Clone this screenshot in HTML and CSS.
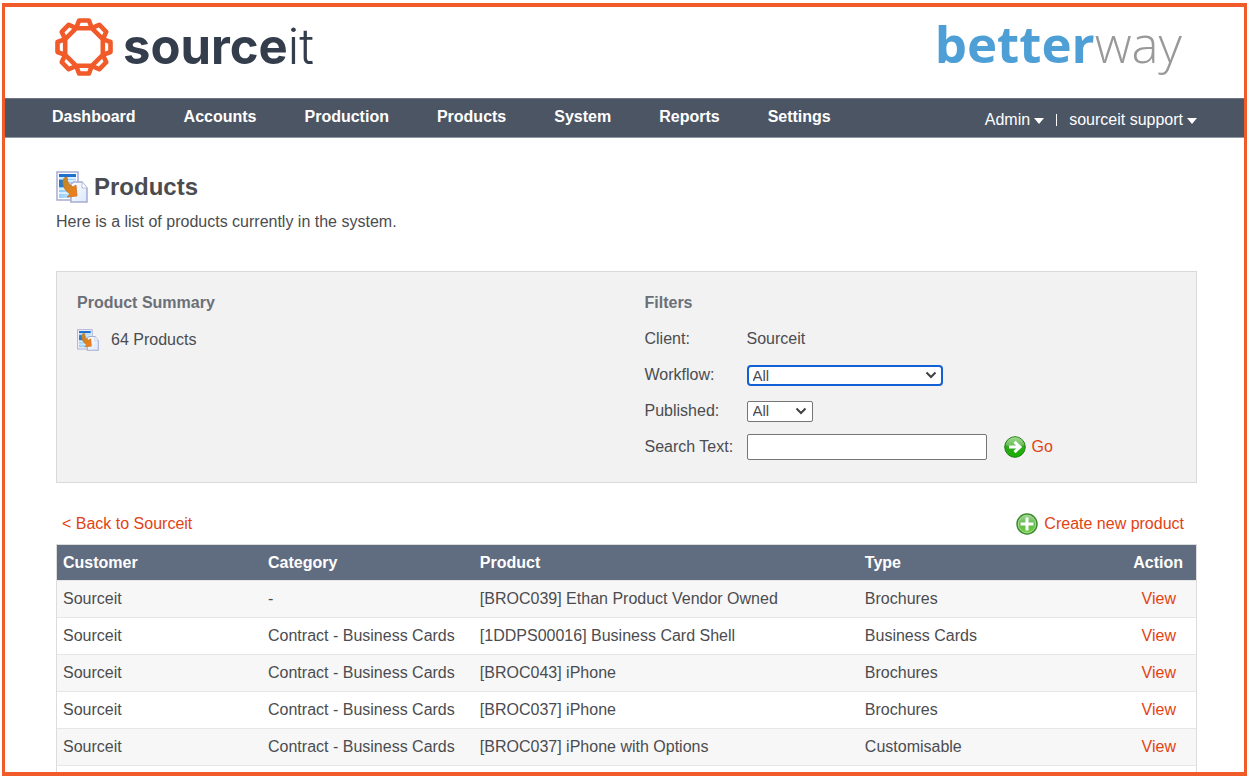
FILE: index.html
```html
<!DOCTYPE html>
<html lang="en">
<head>
<meta charset="utf-8">
<title>Products - sourceit</title>
<link rel="stylesheet" href="styles.css">
</head>
<body>
<svg class="defs" aria-hidden="true">
  <defs>
    <linearGradient id="page-blue" x1="0" y1="0" x2="1" y2="1"><stop offset="0" stop-color="#6fbdf5"/><stop offset="1" stop-color="#c9e8ff"/></linearGradient>
    <linearGradient id="page-white" x1="0" y1="0" x2="1" y2="1"><stop offset="0" stop-color="#fff"/><stop offset="1" stop-color="#d9e8fb"/></linearGradient>
    <linearGradient id="arrow-orange" x1="0" y1="0" x2="1" y2="1"><stop offset="0" stop-color="#b5882c"/><stop offset="1" stop-color="#fb7d15"/></linearGradient>
    <linearGradient id="ball-green" x1="0" y1="0" x2="0" y2="1"><stop offset="0" stop-color="#8ad070"/><stop offset=".5" stop-color="#2fa81c"/><stop offset="1" stop-color="#17b000"/></linearGradient>
    <linearGradient id="ball-soft" x1="0" y1="0" x2="0" y2="1"><stop offset="0" stop-color="#a5d89b"/><stop offset=".5" stop-color="#62b94c"/><stop offset="1" stop-color="#6fd03a"/></linearGradient>
    <symbol id="icon-product" viewBox="0 0 32 32">
      <path d="M1 1h21v28H1z" fill="#fff" stroke="#a6acd2" stroke-width="1.5"/>
      <path d="M3 3h17v24H3z" fill="url(#page-blue)"/>
      <path d="M3 3h17v3H3z" fill="#1d6fd2"/>
      <path d="M3 7h17M12 10h8M12 13h8M3 18h9M3 22h12" stroke="#eef8ff" stroke-width="1.3"/>
      <path d="M3 9h7v7H3z" fill="#237bcf"/>
      <path d="M15 31V13l3-2h8l5 6v14z" fill="url(#page-white)" stroke="#a6acd2" stroke-width="1.5"/>
      <path d="M26 11v6h5" fill="#fff" stroke="#b7bddc"/>
      <path d="M7 9q1-3 4-3 0 7 6 10l3-2 1 11-10 1 3-3Q6 18 7 9z" fill="url(#arrow-orange)" stroke="#c9722a" stroke-width=".8"/>
    </symbol>
  </defs>
</svg>
<div class="frame">
  <header class="brand-bar">
    <a class="brand" href="#">
      <svg class="brand-mark" viewBox="-30 -30 60 60" aria-hidden="true">
        <g fill="none" stroke="#f15a29" stroke-width="4.6" stroke-linejoin="round">
          <path d="M-7.800-18.800H7.800L18.800-7.800V7.800L7.800 18.800H-7.800L-18.800 7.800V-7.800z"/>
          <path id="tooth" d="M-7.800-18.800L-5-26.500H5L7.800-18.800"/>
          <use href="#tooth" transform="rotate(45)"/>
          <use href="#tooth" transform="rotate(90)"/>
          <use href="#tooth" transform="rotate(135)"/>
          <use href="#tooth" transform="rotate(180)"/>
          <use href="#tooth" transform="rotate(225)"/>
          <use href="#tooth" transform="rotate(270)"/>
          <use href="#tooth" transform="rotate(315)"/>
        </g>
      </svg>
      <span class="brand-name"><b>source</b>it</span>
    </a>
    <div class="client-name"><b>better</b>way</div>
  </header>
  <nav class="nav">
    <div class="nav-main">
      <a href="#">Dashboard</a>
      <a href="#">Accounts</a>
      <a href="#">Production</a>
      <a href="#">Products</a>
      <a href="#">System</a>
      <a href="#">Reports</a>
      <a href="#">Settings</a>
    </div>
    <div class="nav-user">
      <button type="button">Admin <span class="caret"></span></button>
      <span class="divider"></span>
      <button type="button">sourceit support <span class="caret"></span></button>
    </div>
  </nav>
  <main class="content">
    <div class="title">
      <svg class="title-icon" aria-hidden="true"><use href="#icon-product"/></svg>
      <h1>Products</h1>
    </div>
    <p class="intro">Here is a list of products currently in the system.</p>
    <section class="panel">
      <div class="summary">
        <h2>Product Summary</h2>
        <div class="summary-row">
          <svg class="summary-icon" aria-hidden="true"><use href="#icon-product"/></svg>
          <span>64 Products</span>
        </div>
      </div>
      <form class="filters">
        <h2>Filters</h2>
        <div class="field"><span class="label">Client:</span><span>Sourceit</span></div>
        <div class="field"><label class="label" for="workflow">Workflow:</label>
          <span class="picker workflow"><select id="workflow"><option>All</option></select><svg viewBox="0 0 12 8" aria-hidden="true"><path d="M1.500 1.500L6 6l4.500-4.500"/></svg></span></div>
        <div class="field"><label class="label" for="published">Published:</label>
          <span class="picker published"><select id="published"><option>All</option></select><svg viewBox="0 0 12 8" aria-hidden="true"><path d="M1.500 1.500L6 6l4.500-4.500"/></svg></span></div>
        <div class="field"><label class="label" for="search">Search Text:</label>
          <input id="search" type="text">
          <button class="go" type="button">
            <svg class="ball" viewBox="0 0 22 22" aria-hidden="true">
              <circle cx="11" cy="11" r="10.300" fill="url(#ball-green)" stroke="#23801a"/>
              <path d="M2 9a9 8 0 0 1 18 0q-9 3-18 0z" fill="#fff" opacity=".22"/>
              <path d="M5 11h10M10.500 5.800L16 11l-5.500 5.200" fill="none" stroke="#fff" stroke-width="3"/>
            </svg>
            <span>Go</span></button>
        </div>
      </form>
    </section>
    <div class="actions">
      <a href="#">&lt; Back to Sourceit</a>
      <a class="create" href="#">
        <svg class="ball" viewBox="0 0 22 22" aria-hidden="true">
          <circle cx="11" cy="11" r="10" fill="url(#ball-soft)" stroke="#3c8a2c" stroke-width="1.500"/>
          <circle cx="11" cy="11" r="8.700" fill="none" stroke="#a9dc96"/>
          <path d="M11 4.500v13M4.500 11h13" stroke="#fff" stroke-width="3"/>
        </svg>
        <span>Create new product</span></a>
    </div>
    <table class="products">
      <thead>
        <tr><th class="col-customer">Customer</th><th class="col-category">Category</th><th class="col-product">Product</th><th class="col-type">Type</th><th class="col-action">Action</th></tr>
      </thead>
      <tbody>
        <tr><td>Sourceit</td><td>-</td><td>[BROC039] Ethan Product Vendor Owned</td><td>Brochures</td><td><a href="#">View</a></td></tr>
        <tr><td>Sourceit</td><td>Contract - Business Cards</td><td>[1DDPS00016] Business Card Shell</td><td>Business Cards</td><td><a href="#">View</a></td></tr>
        <tr><td>Sourceit</td><td>Contract - Business Cards</td><td>[BROC043] iPhone</td><td>Brochures</td><td><a href="#">View</a></td></tr>
        <tr><td>Sourceit</td><td>Contract - Business Cards</td><td>[BROC037] iPhone</td><td>Brochures</td><td><a href="#">View</a></td></tr>
        <tr><td>Sourceit</td><td>Contract - Business Cards</td><td>[BROC037] iPhone with Options</td><td>Customisable</td><td><a href="#">View</a></td></tr>
        <tr><td></td><td></td><td></td><td></td><td></td></tr>
      </tbody>
    </table>
  </main>
</div>
</body>
</html>
```
FILE: styles.css
```css
* {
  box-sizing: border-box;
}

body {
  margin: 0;
  padding: 3px 4px 3px 2px;
  height: 100vh;
  background: #fff;
  color: #4b4c50;
  font: 16px/20px "Liberation Sans", Arial, sans-serif;
}

h1,
h2,
p {
  margin: 0;
}

a {
  color: #e24312;
  text-decoration: none;
}

button {
  padding: 0;
  border: 0;
  background: none;
  color: inherit;
  font: inherit;
}

.defs {
  position: absolute;
  width: 0;
  height: 0;
}

.frame {
  height: 100%;
  overflow: hidden;
  border: solid #f15a29;
  border-width: 4px 3px;
}

.brand-bar {
  display: flex;
  justify-content: space-between;
  align-items: flex-start;
  height: 91px;
  padding: 10px 62px 0 49px;
}

.brand {
  display: flex;
  align-items: center;
  gap: 9px;
  color: #343d4c;
  font: 300 49px/60px Inter, sans-serif;
}

.brand b,
.client-name b {
  font-weight: 700;
}

.brand-mark {
  width: 60px;
  height: 60px;
}

.client-name {
  margin-top: -4px;
  color: #999;
  font: 300 51px/60px "Open Sans", sans-serif;
}

.client-name b {
  color: #4d9fd6;
}

.nav {
  display: flex;
  justify-content: space-between;
  height: 40px;
  padding: 0 47px;
  border-top: 1px solid #6b7482;
  border-bottom: 1px solid #8f96a1;
  background: #4c5564;
  color: #fff;
}

.nav-main {
  display: flex;
  gap: 48px;
  padding-top: 8px;
}

.nav-main a {
  color: #fff;
  font-weight: bold;
}

.nav-user {
  display: flex;
  align-items: center;
  gap: 12px;
  padding-top: 4px;
}

.nav-user button {
  display: flex;
  align-items: center;
  gap: 4px;
}

.caret {
  margin-top: 2px;
  border: solid transparent;
  border-width: 6px 5px 0;
  border-top-color: #fff;
}

.divider {
  width: 1px;
  height: 12px;
  background: #fff;
}

.content {
  padding: 33px 47px 0 51px;
}

.title {
  display: flex;
  align-items: center;
  gap: 6px;
}

.title-icon {
  width: 32px;
  height: 32px;
}

h1 {
  font-size: 24px;
  line-height: 32px;
}

.intro {
  margin-top: 9px;
}

.panel {
  display: grid;
  grid-template-columns: 1fr 1fr;
  margin-top: 39px;
  height: 212px;
  padding: 21px 20px 0;
  border: 1px solid #d9d9d9;
  background: #f2f2f2;
}

h2 {
  color: #6b7078;
  font-size: 16px;
  line-height: 20px;
}

.summary-row {
  display: flex;
  align-items: center;
  gap: 12px;
  margin-top: 16px;
}

.summary-icon {
  width: 22px;
  height: 22px;
}

.filters {
  padding-left: 18px;
}

.field {
  display: flex;
  align-items: center;
  height: 36px;
}

.filters h2 {
  margin-bottom: 8px;
}

.label {
  width: 102px;
}

.picker {
  display: grid;
  align-items: center;
}

.picker > * {
  grid-area: 1 / 1;
}

.picker svg {
  justify-self: end;
  width: 12px;
  height: 8px;
  margin-right: 6px;
  fill: none;
  stroke: #3f4144;
  stroke-width: 2;
  pointer-events: none;
}

select {
  appearance: none;
  width: 100%;
  height: 21px;
  padding: 0 5px;
  border: 1px solid #767676;
  border-radius: 2px;
  background: #fff;
  color: #4b4c50;
  font: 15px/18px "Liberation Sans", Arial, sans-serif;
}

.workflow {
  width: 196px;
}

.workflow select {
  padding: 0 4px;
  border: 2px solid #1260d6;
  border-radius: 4px;
}

.published {
  width: 66px;
}

.filters input {
  width: 240px;
  height: 26px;
  border: 1px solid #767676;
  border-radius: 2px;
  background: #fff;
}

.go,
.create {
  display: flex;
  align-items: center;
  gap: 6px;
}

.go {
  margin-left: 17px;
  color: #e24312;
}

.ball {
  width: 22px;
  height: 22px;
}

.actions {
  display: flex;
  justify-content: space-between;
  align-items: center;
  height: 61px;
  padding: 20px 13px 0 6px;
}

.products {
  width: 100%;
  table-layout: fixed;
  border-collapse: separate;
  border-spacing: 0;
  border: solid #dcdcdc;
  border-width: 1px 1px 0;
}

.products th,
.products td {
  height: 37px;
  padding: 0 6px;
  border-bottom: 1px solid #e6e6e6;
  text-align: left;
}

.products th {
  height: 36px;
  background: #606c80;
  color: #fff;
}

.products tbody tr:nth-child(odd) {
  background: #f7f7f7;
}

.products th:last-child {
  padding-right: 13px;
  text-align: right;
}

.products td:last-child {
  padding-right: 20px;
  text-align: right;
}

.col-customer {
  width: 18%;
}

.col-category {
  width: 18.6%;
}

.col-product {
  width: 33.8%;
}
```
